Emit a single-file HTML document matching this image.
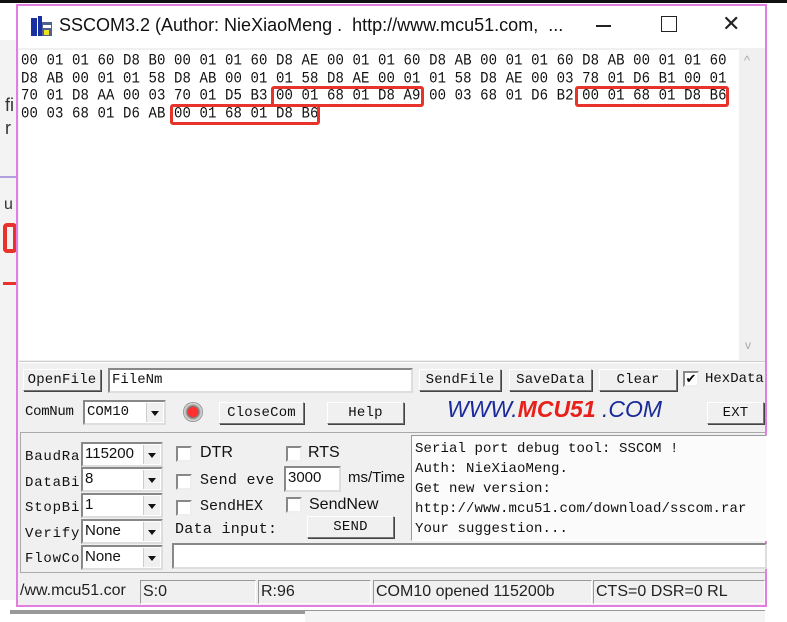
<!DOCTYPE html>
<html><head><meta charset="utf-8"><style>
*{margin:0;padding:0;box-sizing:border-box}
body{width:787px;height:622px;background:#fff;position:relative;overflow:hidden;font-family:"Liberation Sans",sans-serif}
.a{position:absolute}
.m{font-family:"Liberation Mono",monospace;font-size:14px;letter-spacing:0.3px;color:#111;white-space:nowrap}
.btn{position:absolute;background:#f0f0f0;border:1px solid;border-color:#fff #777 #777 #fff;box-shadow:1px 1px 0 #444;font-family:"Liberation Mono",monospace;font-size:14px;letter-spacing:0.2px;text-align:center;color:#111}
.sel{position:absolute;background:#fff;border:2px solid;border-color:#888 #ddd #ddd #888;font-size:15px;color:#111;padding-left:2px;line-height:20px}
.sel b{position:absolute;right:1px;top:1px;bottom:1px;width:17px;background:#f0f0f0;border-left:1px solid #ccc}
.sel b:after{content:"";position:absolute;left:4px;top:8px;border:4px solid transparent;border-top:5px solid #111}
.cb{position:absolute;width:16px;height:16px;background:#fff;border:2px solid;border-color:#888 #eee #eee #888}
.hex{position:absolute;left:21px;font-family:"Liberation Mono",monospace;font-size:14px;color:#111;white-space:pre;letter-spacing:0.1px;transform:scaleY(1.1)}
.red{position:absolute;border:3px solid #e8322c;border-radius:3px}
.st{position:absolute;top:580px;height:24px;border:1px solid;border-color:#999 #fff #fff #999;font-size:16px;line-height:22px;color:#222;padding-left:2px;overflow:hidden;white-space:nowrap}
</style></head><body>
<div class="a" style="left:0;top:0;width:787px;height:3px;background:#111"></div>
<div class="a" style="left:0;top:40px;width:17px;height:560px;background:#f3f3f3"></div>
<div class="a" style="left:0;top:176px;width:17px;height:2px;background:#b0a0e0"></div>
<div class="a" style="left:5px;top:95px;font-size:18px;color:#333">fi</div>
<div class="a" style="left:5px;top:118px;font-size:18px;color:#333">r</div>
<div class="a" style="left:4px;top:196px;font-size:16px;color:#333">u</div>
<div class="a" style="left:3px;top:223px;width:14px;height:30px;border:4px solid #e8322c;border-radius:4px"></div>
<div class="a" style="left:3px;top:282px;width:14px;height:3px;background:#e8322c"></div>
<div class="a" style="left:0;top:606px;width:787px;height:16px;background:#fff"></div>
<div class="a" style="left:10px;top:610px;width:420px;height:4px;background:#999"></div>
<div class="a" style="left:305px;top:610px;width:460px;height:12px;border-top:1px solid #999;background:#f4f4f4"></div>

<div class="a" style="left:16px;top:4px;width:751px;height:603px;border:2px solid #e27ee0;background:#f0f0f0"></div>
<div class="a" style="left:18px;top:6px;width:747px;height:42px;background:#fff"></div>
<svg class="a" style="left:30px;top:14px" width="24" height="24" viewBox="0 0 24 24"><rect x="1" y="4" width="6" height="18" fill="#1a2fa0"/><rect x="8" y="2" width="4" height="20" fill="#1a2fa0"/><rect x="12" y="8" width="10" height="14" fill="#506090"/><rect x="14" y="16" width="5" height="5" fill="#f0e020"/><rect x="13" y="11" width="8" height="3" fill="#fff"/></svg>
<div class="a" style="left:59px;top:15px;font-size:18px;color:#111;white-space:nowrap">SSCOM3.2 (Author: NieXiaoMeng .&nbsp; http://www.mcu51.com,&nbsp; ...</div>
<div class="a" style="left:596px;top:25px;width:15px;height:1.5px;background:#222"></div>
<div class="a" style="left:661px;top:16px;width:16px;height:16px;border:1.5px solid #222"></div>
<div class="a" style="left:722px;top:11px;font-size:22px;color:#222">✕</div>

<div class="a" style="left:19px;top:50px;width:720px;height:310px;background:#fff"></div>
<div class="a" style="left:739px;top:50px;width:24px;height:310px;background:#f0f0f0"></div>
<div class="a" style="left:744px;top:53px;font-size:13px;color:#aaa">^</div>
<div class="a" style="left:745px;top:338px;font-size:12px;color:#aaa">v</div>
<div class="hex" style="top:53px">00 01 01 60 D8 B0 00 01 01 60 D8 AE 00 01 01 60 D8 AB 00 01 01 60 D8 AB 00 01 01 60</div>
<div class="hex" style="top:71px">D8 AB 00 01 01 58 D8 AB 00 01 01 58 D8 AE 00 01 01 58 D8 AE 00 03 78 01 D6 B1 00 01</div>
<div class="hex" style="top:88px">70 01 D8 AA 00 03 70 01 D5 B3 00 01 68 01 D8 A9 00 03 68 01 D6 B2 00 01 68 01 D8 B6</div>
<div class="hex" style="top:106px">00 03 68 01 D6 AB 00 01 68 01 D8 B6</div>
<div class="red" style="left:271px;top:86px;width:153px;height:21px"></div>
<div class="red" style="left:575px;top:86px;width:154px;height:21px"></div>
<div class="red" style="left:170px;top:104px;width:150px;height:21px"></div>

<div class="a" style="left:19px;top:361px;width:746px;height:2px;border-top:1px solid #ccc;background:#fff"></div>

<div class="btn" style="left:23px;top:369px;width:78px;height:22px;line-height:20px">OpenFile</div>
<div class="sel" style="left:108px;top:368px;width:305px;height:25px;font-family:'Liberation Mono',monospace;font-size:14px">FileNm</div>
<div class="btn" style="left:419px;top:369px;width:82px;height:22px;line-height:20px">SendFile</div>
<div class="btn" style="left:509px;top:369px;width:83px;height:22px;line-height:20px">SaveData</div>
<div class="btn" style="left:599px;top:369px;width:78px;height:22px;line-height:20px">Clear</div>
<div class="cb" style="left:683px;top:371px;font-size:13px;line-height:12px;text-align:center;color:#000">✔</div>
<div class="a m" style="left:705px;top:371px;letter-spacing:0">HexData</div>

<div class="a m" style="left:25px;top:404px;letter-spacing:-0.3px">ComNum</div>
<div class="sel" style="left:83px;top:400px;width:83px;height:25px;font-family:'Liberation Mono',monospace;font-size:14px">COM10<b></b></div>
<div class="a" style="left:183px;top:402px;width:20px;height:20px;border-radius:50%;background:radial-gradient(circle,#ff3030 0 35%,#777 40%,#ddd 60%,#555 75%)"></div>
<div class="btn" style="left:219px;top:402px;width:85px;height:22px;line-height:20px">CloseCom</div>
<div class="btn" style="left:327px;top:402px;width:77px;height:22px;line-height:20px">Help</div>
<div class="a" style="left:447px;top:396px;font-size:23px;font-style:italic;color:#1a2a9a;white-space:nowrap">WWW.<span style="color:#e8201a;font-weight:bold">MCU51</span> .COM</div>
<div class="btn" style="left:707px;top:402px;width:57px;height:22px;line-height:20px">EXT</div>

<div class="a" style="left:20px;top:432px;width:746px;height:141px;border:1px solid #aaa;border-right:none"></div>
<div class="a m" style="left:25px;top:449px;letter-spacing:0.8px">BaudRa</div>
<div class="a m" style="left:25px;top:475px;letter-spacing:0.8px">DataBi</div>
<div class="a m" style="left:25px;top:500px;letter-spacing:0.8px">StopBi</div>
<div class="a m" style="left:25px;top:526px;letter-spacing:0.8px">Verify</div>
<div class="a m" style="left:25px;top:551px;letter-spacing:0.8px">FlowCo</div>
<div class="sel" style="left:81px;top:442px;width:82px;height:25px">115200<b></b></div>
<div class="sel" style="left:81px;top:467px;width:82px;height:25px">8<b></b></div>
<div class="sel" style="left:81px;top:493px;width:82px;height:25px">1<b></b></div>
<div class="sel" style="left:81px;top:519px;width:82px;height:25px">None<b></b></div>
<div class="sel" style="left:81px;top:545px;width:82px;height:25px">None<b></b></div>

<div class="cb" style="left:176px;top:446px"></div>
<div class="a" style="left:200px;top:444px;font-size:16px;color:#111">DTR</div>
<div class="cb" style="left:286px;top:446px"></div>
<div class="a" style="left:308px;top:444px;font-size:16px;color:#111">RTS</div>
<div class="cb" style="left:176px;top:474px"></div>
<div class="a m" style="left:200px;top:472px;font-size:15px">Send eve</div>
<div class="sel" style="left:284px;top:466px;width:57px;height:26px;font-size:15px">3000</div>
<div class="a" style="left:348px;top:469px;font-size:15px;color:#111">ms/Time</div>
<div class="cb" style="left:176px;top:500px"></div>
<div class="a m" style="left:200px;top:498px;font-size:15px;letter-spacing:0">SendHEX</div>
<div class="cb" style="left:286px;top:497px"></div>
<div class="a" style="left:309px;top:496px;font-size:16px;color:#111">SendNew</div>
<div class="a m" style="left:175px;top:521px;font-size:15px;letter-spacing:0.3px">Data input:</div>
<div class="btn" style="left:307px;top:516px;width:87px;height:22px;line-height:20px">SEND</div>

<div class="a" style="left:411px;top:435px;width:356px;height:106px;background:#fbfbfb;border:1px solid;border-color:#999 #fff #fff #999"></div>
<div class="a m" style="left:415px;top:439px;font-size:14px;letter-spacing:0.1px;line-height:20px;white-space:pre">Serial port debug tool: SSCOM !
Auth: NieXiaoMeng.
Get new version:
http://www.mcu51.com/download/sscom.rar
Your suggestion...</div>
<div class="a" style="left:172px;top:543px;width:595px;height:26px;background:#fff;border:2px solid;border-color:#888 #ddd #ddd #888"></div>

<div class="st" style="left:18px;width:121px;border:none">/ww.mcu51.cor</div>
<div class="st" style="left:140px;width:116px">S:0</div>
<div class="st" style="left:258px;width:113px">R:96</div>
<div class="st" style="left:373px;width:219px">COM10 opened 115200b</div>
<div class="st" style="left:593px;width:172px">CTS=0 DSR=0 RL</div>
</body></html>
